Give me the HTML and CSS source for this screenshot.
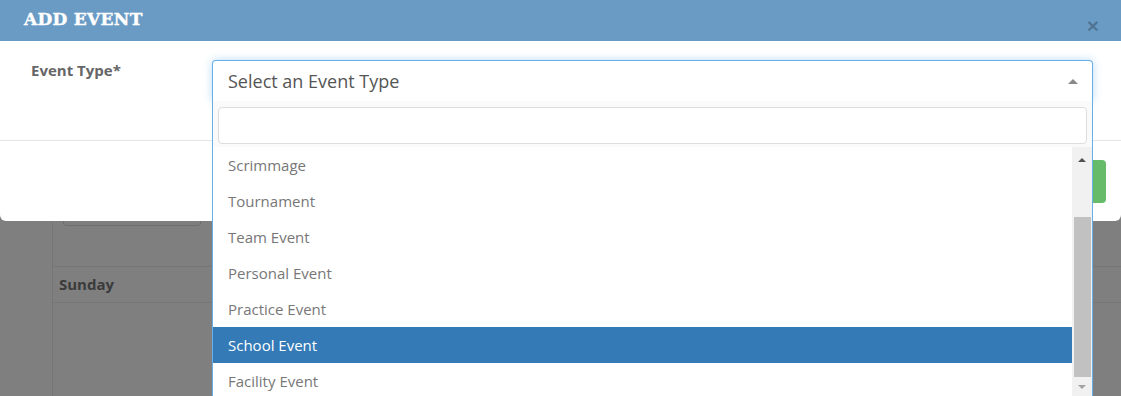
FILE: index.html
```html
<!DOCTYPE html>
<html>
<head>
<meta charset="utf-8">
<link rel="stylesheet" href="styles.css">
</head>
<body>
<div class="page">
  <div class="calendar">
    <div class="toolbar"><div class="search-box"></div></div>
    <div class="day-head">Sunday</div>
    <div class="day-body"></div>
  </div>
</div>
<div class="backdrop"></div>
<div class="modal">
  <div class="modal-header">
    <h4 class="modal-title">ADD EVENT</h4>
    <span class="close">&times;</span>
  </div>
  <div class="modal-body">
    <label class="field-label">Event Type*</label>
    <div class="select-wrap">
      <div class="select-box">
        <span class="select-text">Select an Event Type</span>
        <span class="select-arrow"></span>
      </div>
      <div class="dropdown">
        <div class="dropdown-search"><div class="search-input"></div></div>
        <div class="results">
          <ul class="options">
            <li>Scrimmage</li>
            <li>Tournament</li>
            <li>Team Event</li>
            <li>Personal Event</li>
            <li>Practice Event</li>
            <li class="active">School Event</li>
            <li>Facility Event</li>
          </ul>
          <div class="scrollbar">
            <span class="sb-up"></span>
            <div class="sb-track"><div class="sb-thumb"></div></div>
            <span class="sb-down"></span>
          </div>
        </div>
      </div>
    </div>
  </div>
  <div class="modal-footer"><span class="btn-save"></span></div>
</div>
</body>
</html>
```
FILE: styles.css
```css
html, body { margin: 0; padding: 0; }
body {
  width: 1121px;
  height: 396px;
  overflow: hidden;
  background: #fff;
  font-family: "Open Sans", "Liberation Sans", sans-serif;
  position: relative;
}
.page { padding: 0 0 0 52px; }
.calendar {
  border-left: 1px solid #ececec;
  height: 396px;
}
.toolbar {
  padding: 184px 0 0 10px;
  height: 82px;
  border-bottom: 1px solid #ececec;
}
.search-box {
  width: 136px;
  height: 40px;
  border: 1px solid #ddd;
  border-radius: 3px;
}
.day-head {
  height: 35px;
  line-height: 35px;
  padding-left: 6px;
  font-weight: 700;
  font-size: 15px;
  color: #777;
  border-bottom: 1px solid #ececec;
}
.backdrop {
  position: absolute;
  inset: 0;
  background: rgba(0,0,0,0.5);
}
.modal {
  position: absolute;
  left: 0;
  top: 0;
  width: 1121px;
  background: #fff;
  border-radius: 0 0 6px 6px;
}
.modal-header {
  height: 41px;
  background: #6a9bc4;
  display: flex;
  align-items: center;
  justify-content: space-between;
  padding: 0 22px 0 24px;
}
.modal-title {
  margin: 0;
  font-family: "DejaVu Serif", "Liberation Serif", serif;
  font-weight: 900;
  font-size: 17px;
  color: #fff;
  letter-spacing: 0.3px;
  position: relative;
  top: -2px;
  -webkit-text-stroke: 0.4px #fff;
}
.close {
  font-family: "Liberation Sans", sans-serif;
  font-size: 21px;
  font-weight: 700;
  color: rgba(0,0,0,0.25);
  position: relative;
  top: 5px;
}
.modal-body {
  display: flex;
  padding: 19px 0 39px 31px;
  border-bottom: 1px solid #e5e5e5;
}
.field-label {
  width: 181px;
  font-weight: 700;
  font-size: 15px;
  color: #666;
}
.select-wrap {
  width: 881px;
  position: relative;
}
.select-box {
  height: 40px;
  border: 1px solid #66afe9;
  border-bottom: none;
  border-radius: 4px 4px 0 0;
  box-shadow: 0 0 8px rgba(102,175,233,0.45);
  background: #fff;
  display: flex;
  align-items: center;
  justify-content: space-between;
  padding: 0 14px 0 15px;
}
.select-text {
  font-size: 18px;
  color: #555;
}
.select-arrow {
  width: 0;
  height: 0;
  border-left: 5px solid transparent;
  border-right: 5px solid transparent;
  border-bottom: 5px solid #888;
}
.dropdown {
  position: absolute;
  left: 0;
  top: 41px;
  width: 881px;
  box-sizing: border-box;
  border-left: 1px solid #66afe9;
  border-right: 1px solid #66afe9;
  background: #fff;
  z-index: 2;
}
.dropdown-search {
  background: #fafafa;
  padding: 6px 5px 3px 5px;
}
.search-input {
  height: 35px;
  border: 1px solid #ddd;
  border-radius: 4px;
  background: #fff;
}
.results {
  display: flex;
  height: 260px;
  overflow: hidden;
}
.options {
  list-style: none;
  margin: 0;
  padding: 0;
  flex: 1;
}
.options li {
  height: 36px;
  line-height: 36px;
  padding-left: 15px;
  font-size: 15px;
  color: #777;
}
.options li.active {
  background: #337ab7;
  color: #fff;
}
.scrollbar {
  width: 20px;
  background: #f1f1f1;
  display: flex;
  flex-direction: column;
  align-items: center;
}
.sb-up {
  margin-top: 11px;
  width: 0; height: 0;
  border-left: 4px solid transparent;
  border-right: 4px solid transparent;
  border-bottom: 4px solid #505050;
}
.sb-track {
  height: 210px;
  width: 100%;
  position: relative;
}
.sb-thumb {
  position: absolute;
  left: 2px;
  right: 1px;
  top: 55px;
  height: 160px;
  background: #c1c1c1;
}
.sb-down {
  margin-top: 13px;
  width: 0; height: 0;
  border-left: 4px solid transparent;
  border-right: 4px solid transparent;
  border-top: 4px solid #a3a3a3;
}
.modal-footer {
  height: 80px;
  display: flex;
  justify-content: flex-end;
  align-items: flex-start;
  padding: 19px 15px 0 0;
  box-sizing: border-box;
}
.btn-save {
  width: 80px;
  height: 43px;
  background: #66bb6a;
  border-radius: 4px;
}
```
